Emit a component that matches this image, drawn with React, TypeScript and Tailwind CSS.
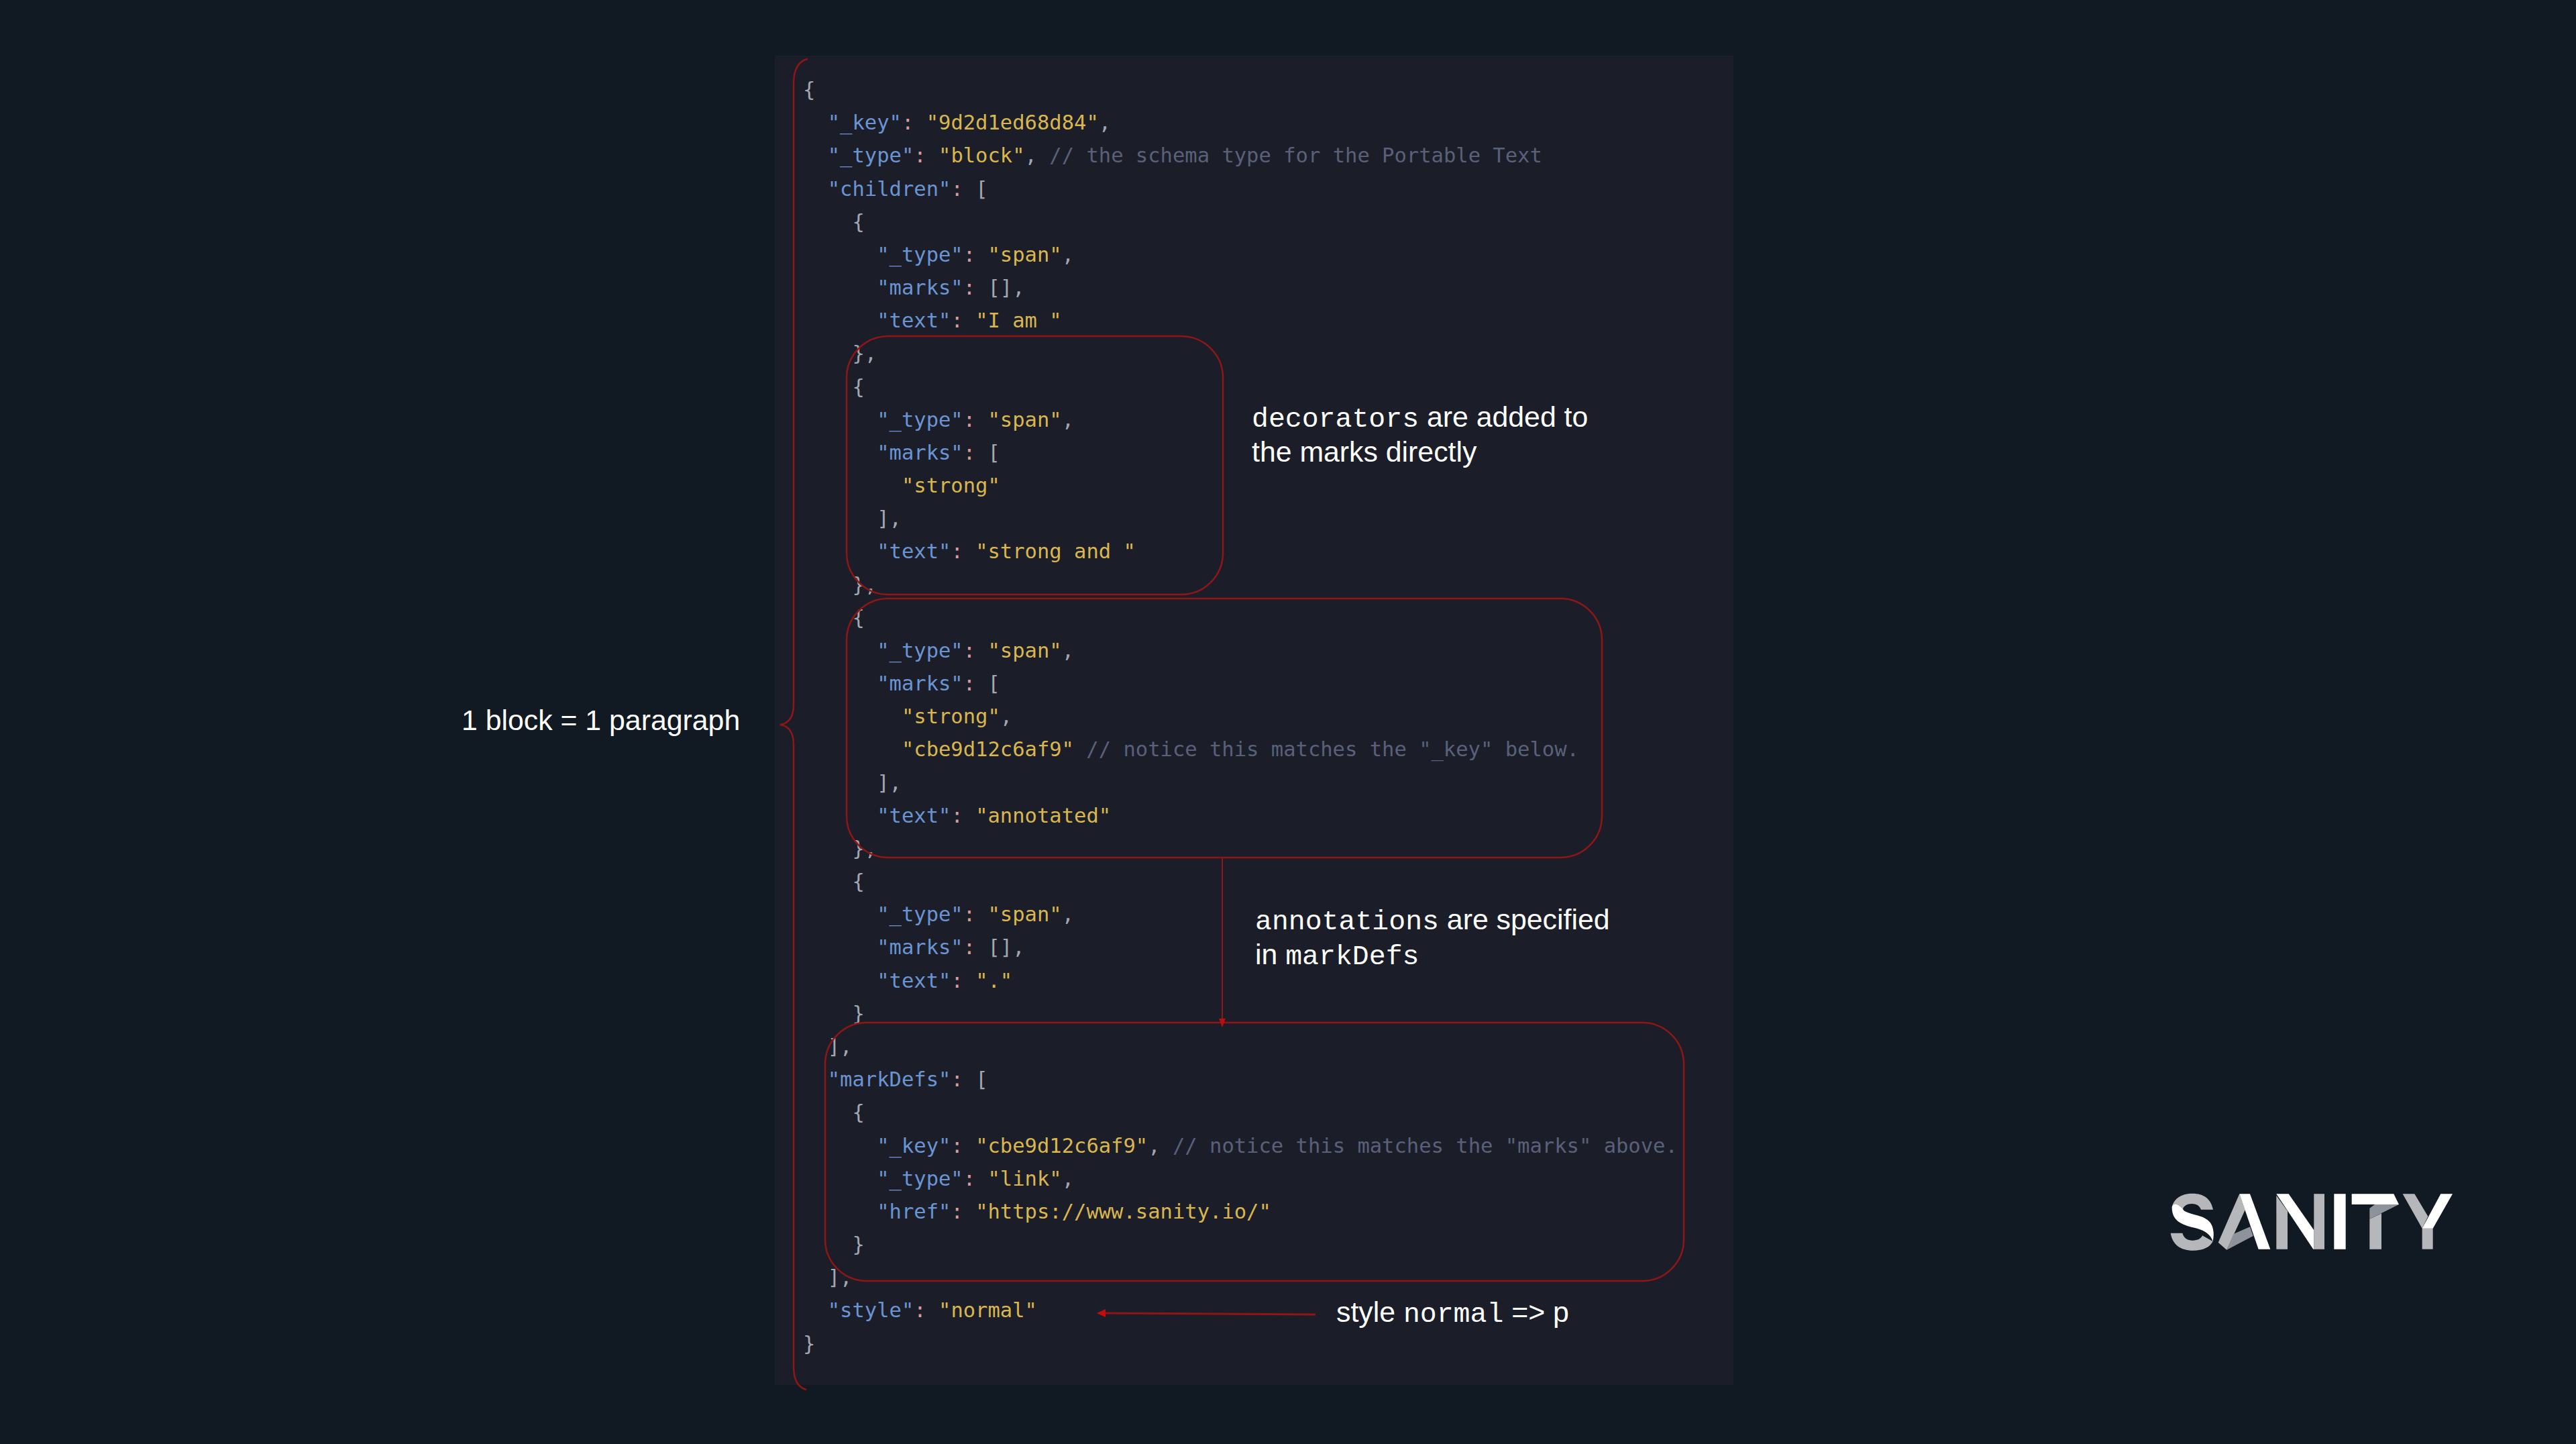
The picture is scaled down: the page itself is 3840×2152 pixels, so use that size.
const KEY = "text-[#6a94d2]";
const STR = "text-[#d9b64e]";
const COLON = "text-[#d99c9c]";
const PUNCT = "text-[#a3a7b0]";
const NOTE = "text-[#5a6079]";

type Token = [string, string];

const P = (s: string): Token => [s, PUNCT];
const S = (s: string): Token => [s, STR];
const C = (s: string): Token => [s, NOTE];

// "key": shorthand
const K = (indent: number, name: string): Token[] => [
  [" ".repeat(indent), PUNCT],
  [`"${name}"`, KEY],
  [":", COLON],
  [" ", PUNCT],
];

const LINES: Token[][] = [
  [P("{")],
  [...K(2, "_key"), S('"9d2d1ed68d84"'), P(",")],
  [...K(2, "_type"), S('"block"'), P(", "), C("// the schema type for the Portable Text")],
  [...K(2, "children"), P("[")],
  [P("    {")],
  [...K(6, "_type"), S('"span"'), P(",")],
  [...K(6, "marks"), P("[],")],
  [...K(6, "text"), S('"I am "')],
  [P("    },")],
  [P("    {")],
  [...K(6, "_type"), S('"span"'), P(",")],
  [...K(6, "marks"), P("[")],
  [P("        "), S('"strong"')],
  [P("      ],")],
  [...K(6, "text"), S('"strong and "')],
  [P("    },")],
  [P("    {")],
  [...K(6, "_type"), S('"span"'), P(",")],
  [...K(6, "marks"), P("[")],
  [P("        "), S('"strong"'), P(",")],
  [P("        "), S('"cbe9d12c6af9"'), P(" "), C('// notice this matches the "_key" below.')],
  [P("      ],")],
  [...K(6, "text"), S('"annotated"')],
  [P("    },")],
  [P("    {")],
  [...K(6, "_type"), S('"span"'), P(",")],
  [...K(6, "marks"), P("[],")],
  [...K(6, "text"), S('"."')],
  [P("    }")],
  [P("  ],")],
  [...K(2, "markDefs"), P("[")],
  [P("    {")],
  [...K(6, "_key"), S('"cbe9d12c6af9"'), P(", "), C('// notice this matches the "marks" above.')],
  [...K(6, "_type"), S('"link"'), P(",")],
  [...K(6, "href"), S('"https://www.sanity.io/"')],
  [P("    }")],
  [P("  ],")],
  [...K(2, "style"), S('"normal"')],
  [P("}")],
];

const Mono = ({ children }: { children: string }) => (
  <span className="font-['Liberation_Mono',monospace] text-[41.5px]">{children}</span>
);

const Overlay = () => (
  <svg
    className="absolute inset-0 overflow-visible"
    width="1429"
    height="1981"
    viewBox="1155 83 1429 1981"
    fill="none"
    stroke="#8f1616"
    strokeWidth="2.5"
  >
    <path d="M1204 88 C1192 90 1183 102 1183 124 V1050 C1183 1068 1176 1078 1163 1080 C1176 1082 1183 1092 1183 1110 V2036 C1183 2056 1190 2068 1202 2071" />
    <rect x="1262" y="501" width="561" height="385" rx="62" />
    <rect x="1262" y="892" width="1126" height="386" rx="62" />
    <rect x="1230" y="1524" width="1280" height="385" rx="62" />
    <path d="M1822 1278 V1520" strokeWidth="2" />
    <path d="M1817 1518 H1827 L1822 1531 Z" fill="#b80f0f" stroke="none" />
    <path d="M1646 1957 L1961 1959" strokeWidth="3" />
    <path d="M1635 1957 L1648 1951 V1963 Z" fill="#c40c0c" stroke="none" />
  </svg>
);

const SanityLogo = () => (
  <svg width="480" height="160" viewBox="0 0 1440 480" className="shrink-0">
    <g fill="#b6b7bb">
      <path d="M297 188 H243 C236 170 222 162 203 162 C180 162 165 172 162 186 L113 176 C122 138 156 116 205 116 C255 116 288 140 297 188 Z" />
      <path d="M107 293 H160 C166 315 182 326 206 326 C228 326 244 318 249 304 L296 330 C284 356 252 371 207 371 C152 371 115 344 107 293 Z" />
      <path d="M415 118 L440 190 L358 368 L320 335 Z" />
      <path d="M580 125 L630 195 V365 H580 Z" />
      <path d="M748 118 H795 V365 H748 Z" />
      <path d="M997 230 L1050 205 V365 H997 Z" />
      <path d="M1145 118 H1198 L1258 218 L1232 272 Z" />
      <path d="M1232 272 H1280 V365 H1232 Z" />
    </g>
    <g fill="#8e929a">
      <path d="M388 297 L462 265 L476 306 L358 368 Z" />
      <path d="M997 182 L1020 165 H1128 L997 230 Z" />
    </g>
    <g fill="#ffffff">
      <path d="M113 176 C120 160 135 158 162 186 C168 198 190 204 220 212 C270 224 296 244 299 290 C300 305 298 320 296 330 C286 300 262 282 225 272 C165 258 112 244 113 176 Z" />
      <path d="M415 118 H462 L553 365 H500 Z" />
      <path d="M580 118 H635 L748 280 V365 H745 Z" />
      <path d="M838 118 H890 V365 H838 Z" />
      <path d="M917 118 H1105 L1128 165 H917 Z" />
      <path d="M1315 118 H1368 L1280 272 H1232 Z" />
    </g>
  </svg>
);

export default function App() {
  return (
    <div className="flex h-[2152px] w-full items-center bg-[#111923] pb-[5px] font-['Liberation_Sans',sans-serif] text-[42.8px] text-white">
      <div className="w-[1155px] shrink-0 pl-[688px]">1 block = 1 paragraph</div>
      <div className="relative h-[1981px] w-[1429px] shrink-0 bg-[#1b1e29] pl-[42px] pt-[26px]">
        <pre className="font-['DejaVu_Sans_Mono',monospace] text-[30.5px] leading-[49.17px]">
          {LINES.map((tokens, i) => (
            <div key={i}>
              {tokens.map(([text, color], j) => (
                <span key={j} className={color}>
                  {text}
                </span>
              ))}
            </div>
          ))}
        </pre>
        <Overlay />
        <p className="absolute left-[711px] top-[514px] leading-[49px]">
          <Mono>decorators</Mono> are added to
          <br />
          the marks directly
        </p>
        <p className="absolute left-[716px] top-[1263px] leading-[49px]">
          <Mono>annotations</Mono> are specified
          <br />
          in <Mono>markDefs</Mono>
        </p>
        <p className="absolute left-[837px] top-[1848px] leading-[49px]">
          style <Mono>normal</Mono> =&gt; p
        </p>
      </div>
      <div className="ml-[616px] mt-[1492px]">
        <SanityLogo />
      </div>
    </div>
  );
}
